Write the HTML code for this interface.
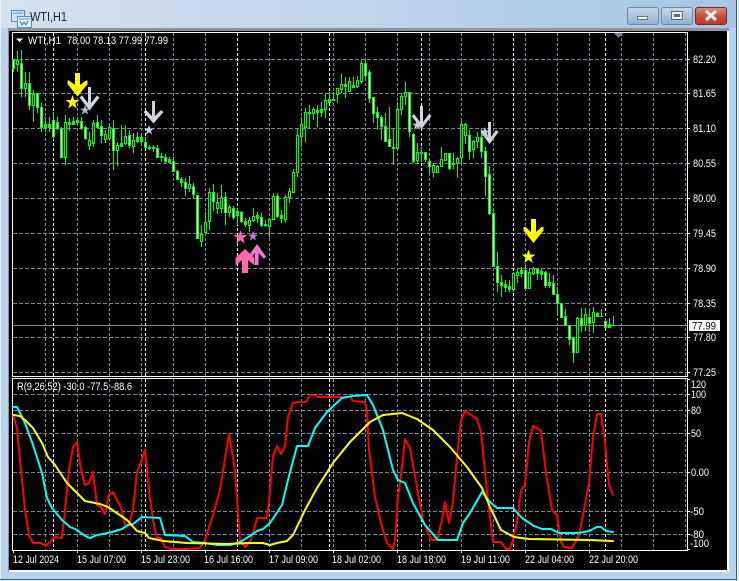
<!DOCTYPE html>
<html><head><meta charset="utf-8">
<style>
html,body{margin:0;padding:0;background:#b9d3ec;overflow:hidden}
svg{display:block}
text{font-family:"Liberation Sans",sans-serif;font-size:11px;fill:#fff}
</style></head>
<body>
<svg width="739" height="581" viewBox="0 0 739 581" xmlns="http://www.w3.org/2000/svg">
<defs>
<linearGradient id="tb" x1="0" y1="0" x2="1" y2="0"><stop offset="0" stop-color="#d3e2f1"/><stop offset=".5" stop-color="#bdd4ea"/><stop offset="1" stop-color="#a6c5e3"/></linearGradient>
<linearGradient id="bt" x1="0" y1="0" x2="0" y2="1"><stop offset="0" stop-color="#c6d8ea"/><stop offset=".5" stop-color="#abc4dc"/><stop offset="1" stop-color="#8fb0cf"/></linearGradient>
<linearGradient id="cl" x1="0" y1="0" x2="0" y2="1"><stop offset="0" stop-color="#dc8f80"/><stop offset=".5" stop-color="#c9523f"/><stop offset="1" stop-color="#b83a2a"/></linearGradient>
</defs>
<rect width="739" height="581" fill="#b7d2ec"/>
<rect width="739" height="28" fill="url(#tb)"/>
<path d="M0 579.500H737M736.500 0V580" stroke="#1d6a84" fill="none"/>
<path d="M0 580.500H739M737.500 0V581M738.500 0V581" stroke="#e4edf5" fill="none"/>
<path d="M.5 0V579" stroke="#e6f0f8" fill="none"/>
<!-- title icon -->
<rect x="11.500" y="10.500" width="13" height="11" fill="#cfe3f7" stroke="#4f8fd0"/>
<rect x="17.500" y="16.500" width="14" height="11" fill="#e8f2fb" stroke="#4f8fd0"/>
<path d="M13 13H23M19 19H30" stroke="#4f8fd0" fill="none"/>
<path d="M20 21L22 25L24 22L26 25L28 21" stroke="#3a78b8" fill="none"/>
<text x="30" y="21" style="font-size:13px;fill:#17243a" textLength="37" lengthAdjust="spacingAndGlyphs">WTI,H1</text>
<!-- window buttons -->
<rect x="627.500" y="7.500" width="31" height="17" rx="2.500" fill="url(#bt)" stroke="#6d87a3"/>
<rect x="637.500" y="16.500" width="10" height="3" fill="#f0f3f6" stroke="#4d5f75" stroke-width=".8"/>
<rect x="661.500" y="7.500" width="31" height="17" rx="2.500" fill="url(#bt)" stroke="#6d87a3"/>
<rect x="671.500" y="11.500" width="11" height="8" fill="#f2f4f7" stroke="#3c4a5c" stroke-width=".8"/>
<rect x="674" y="14" width="6" height="3" fill="#5b6a7d"/>
<rect x="695.500" y="7.500" width="31" height="17" rx="2.500" fill="url(#cl)" stroke="#6e2a2a"/>
<path d="M706 11L716 20M716 11L706 20" stroke="#f1f1f1" stroke-width="3" fill="none"/>
<!-- chart client -->
<rect x="8" y="28" width="721" height="544" fill="#8d949b"/>
<rect x="9" y="31" width="718" height="539" fill="#000"/>
<path d="M727.500 31V571M728.500 31V571M9 570.500H729M9 571.500H729" stroke="#fff" fill="none"/>
<!-- grid -->
<g fill="none" stroke="#778899" stroke-width="1" stroke-dasharray="4 2" shape-rendering="crispEdges">
<path d="M13 59.500H687M13 93.500H687M13 128.500H687M13 163.500H687M13 198.500H687M13 233.500H687M13 268.500H687M13 303.500H687M13 337.500H687M13 372.500H687"/>
<path d="M13 394.500H687M13 410.500H687M13 433.500H687M13 472.500H687M13 511.500H687M13 534.500H687"/>
</g>
<g fill="none" stroke="#778899" stroke-width="1" stroke-dasharray="3 2" shape-rendering="crispEdges">
<path d="M45.500 33V376M77.500 33V376M109.500 33V376M141.500 33V376M173.500 33V376M205.500 33V376M237.500 33V376M269.500 33V376M301.500 33V376M333.500 33V376M365.500 33V376M397.500 33V376M429.500 33V376M461.500 33V376M493.500 33V376M525.500 33V376M557.500 33V376M589.500 33V376M621.500 33V376M653.500 33V376M685.500 33V376"/>
<path d="M45.500 379V550M77.500 379V550M109.500 379V550M141.500 379V550M173.500 379V550M205.500 379V550M237.500 379V550M269.500 379V550M301.500 379V550M333.500 379V550M365.500 379V550M397.500 379V550M429.500 379V550M461.500 379V550M493.500 379V550M525.500 379V550M557.500 379V550M589.500 379V550M621.500 379V550M653.500 379V550M685.500 379V550"/>
</g>
<g fill="none" stroke="#fff" stroke-width="1" stroke-dasharray="3 2" shape-rendering="crispEdges">
<path d="M53.500 33V376M145.500 33V376M237.500 33V376M329.500 33V376M421.500 33V376M513.500 33V376M605.500 33V376"/>
<path d="M53.500 379V550M145.500 379V550M237.500 379V550M329.500 379V550M421.500 379V550M513.500 379V550M605.500 379V550"/>
</g>
<!-- frames -->
<path d="M12.500 32.500H687.500V376.500H12.500ZM12.500 378.500H687.500V550.500H12.500Z" fill="none" stroke="#fff" shape-rendering="crispEdges"/>
<path d="M687 59.500H690M687 93.500H690M687 128.500H690M687 163.500H690M687 198.500H690M687 233.500H690M687 268.500H690M687 303.500H690M687 337.500H690M687 372.500H690M687 379.500H690M687 394.500H690M687 410.500H690M687 433.500H690M687 472.500H690M687 511.500H690M687 534.500H690M687 549.500H690M13.500 550V553M77.500 550V553M141.500 550V553M205.500 550V553M269.500 550V553M333.500 550V553M397.500 550V553M461.500 550V553M525.500 550V553M589.500 550V553" stroke="#fff" fill="none"/>
<path d="M614 33H623L618.500 38Z" fill="#6f8294"/>
<path d="M16 38.500H23L19.500 42Z" fill="#fff"/>
<path d="M13 325.500H687" stroke="#8a8a8a" fill="none" shape-rendering="crispEdges"/>
<!-- candles wicks -->
<g fill="none" shape-rendering="crispEdges">
<path stroke="#00ff00" stroke-width="1" d="M13.500 59V72M17.500 51V72M21.500 50V97M25.500 72V97M29.500 72V110M33.500 90V122M37.500 93V113M41.500 103V132M45.500 117V132M49.500 117V132M53.500 112V140M57.500 117V130M61.500 127V158M65.500 115V165M69.500 118V131M73.500 117V125M77.500 117V125M81.500 117V130M85.500 126V140M89.500 132V150M93.500 120V147M97.500 115V128M101.500 120V143M105.500 130V143M109.500 123V140M113.500 120V170M117.500 142V166M121.500 125V147M125.500 125V145M129.500 130V148M133.500 133V153M137.500 132V143M141.500 133V143M145.500 137V147M149.500 145V150M153.500 145V152M157.500 145V157M161.500 153V162M165.500 154V163M169.500 157V163M173.500 157V171M177.500 170V180M181.500 177V187M185.500 178V196M189.500 176V192M193.500 183V198M197.500 195V238M201.500 225V247M205.500 212V233M209.500 188V230M213.500 184V211M217.500 193V214M221.500 185V213M225.500 192V225M229.500 205V217M233.500 206V220M237.500 208V225M241.500 211V223M245.500 218V227M249.500 217V232M253.500 208V222M257.500 212V223M261.500 213V227M265.500 220V227M269.500 218V237M273.500 193V220M277.500 193V218M281.500 210V223M285.500 195V223M289.500 188V203M293.500 169V193M297.500 128V177M301.500 117V147M305.500 108V142M309.500 105V128M313.500 107V120M317.500 105V127M321.500 102V117M325.500 93V118M329.500 92V102M333.500 92V100M337.500 88V103M341.500 74V93M345.500 77V98M349.500 77V92M353.500 77V88M357.500 76V88M361.500 60V84M365.500 60V78M369.500 70V103M373.500 97V123M377.500 107V130M381.500 115V140M385.500 113V142M389.500 107V147M393.500 128V165M397.500 102V148M401.500 93V115M405.500 82V105M409.500 92V137M413.500 133V163M417.500 143V163M421.500 147V162M425.500 152V162M429.500 160V175M433.500 163V177M437.500 165V173M441.500 147V166M445.500 153V161M449.500 153V170M453.500 153V169M457.500 157V178M461.500 121V163M465.500 123V144M469.500 130V160M473.500 140V158M477.500 132V148M481.500 128V158M485.500 147V196M489.500 166V215M493.500 210V266M497.500 252V292M501.500 275V297M505.500 280V292M509.500 280V292M513.500 272V292M517.500 268V283M521.500 267V277M525.500 265V288M529.500 268V289M533.500 267V275M537.500 268V280M541.500 268V280M545.500 271V288M549.500 273V288M553.500 275V295M557.500 287V313M561.500 303V318M565.500 309V326M569.500 325V345M573.500 337V363M577.500 317V352M581.500 308V332M585.500 308V331M589.500 310V332M593.500 307V333M597.500 312V317M601.500 309V317M605.500 318V327M609.500 318V327M613.500 316V326"/>
<!-- candle bodies -->
<path stroke="#00ff00" stroke-width="3" d="M13.500 59V69M17.500 60V65M21.500 63V89M25.500 83V89M29.500 83V106M33.500 94V106M37.500 93V108M41.500 107V128M45.500 124V128M49.500 124V128M53.500 120V137M57.500 122V129M61.500 128V158M65.500 122V158M69.500 122V125M73.500 121V125M77.500 120V123M81.500 121V129M85.500 127V139M89.500 140V146M93.500 123V144M97.500 122V128M101.500 126V136M105.500 134V140M109.500 127V139M113.500 128V151M117.500 145V151M121.500 143V147M125.500 136V144M129.500 135V146M133.500 140V147M137.500 137V142M141.500 137V142M145.500 142V148M149.500 147V149M153.500 147V149M157.500 148V158M161.500 156V158M165.500 157V162M169.500 159V163M173.500 161V172M177.500 171V180M181.500 179V183M185.500 182V189M189.500 184V189M193.500 186V195M197.500 195V239M201.500 234V242M205.500 222V233M209.500 192V222M213.500 192V202M217.500 202V209M221.500 197V209M225.500 197V213M229.500 207V213M233.500 208V218M237.500 211V216M241.500 212V222M245.500 221V225M249.500 220V226M253.500 216V221M257.500 215V219M261.500 217V226M265.500 224V226M269.500 219V227M273.500 196V220M277.500 196V217M281.500 215V219M285.500 197V220M289.500 191V198M293.500 172V193M297.500 135V173M301.500 124V137M305.500 112V128M309.500 112V114M313.500 109V114M317.500 110V113M321.500 109V113M325.500 100V110M329.500 99V103M333.500 99V101M337.500 88V95M341.500 84V90M345.500 84V87M349.500 81V92M353.500 85V88M357.500 80V87M361.500 63V82M365.500 63V76M369.500 72V99M373.500 97V114M377.500 112V118M381.500 117V127M385.500 126V142M389.500 139V147M393.500 147V149M397.500 109V149M401.500 96V110M405.500 92V97M409.500 92V132M413.500 134V162M417.500 152V161M421.500 152V154M425.500 152V160M429.500 161V167M433.500 165V173M437.500 166V173M441.500 159V167M445.500 153V161M449.500 153V169M453.500 163V165M457.500 158V164M461.500 124V158M465.500 124V136M469.500 135V152M473.500 141V150M477.500 137V142M481.500 137V152M485.500 151V177M489.500 174V214M493.500 213V267M497.500 266V283M501.500 282V286M505.500 284V288M509.500 286V290M513.500 273V290M517.500 272V276M521.500 270V274M525.500 270V289M529.500 272V289M533.500 268V274M537.500 269V274M541.500 271V275M545.500 272V286M549.500 282V286M553.500 283V295M557.500 294V304M561.500 303V318M565.500 316V326M569.500 325V340M573.500 337V353M577.500 318V353M581.500 318V326M585.500 314V326M589.500 317V324M593.500 312V323M597.500 313V317M601.500 316V317M605.500 321V328M609.500 324V328M613.500 325V326"/>
<path stroke="#fff" stroke-width="1" d="M13.500 60V68M21.500 64V88M29.500 84V105M37.500 94V107M41.500 108V127M53.500 121V136M57.500 123V128M61.500 129V157M81.500 122V128M85.500 128V138M97.500 123V127M101.500 127V135M113.500 129V150M129.500 136V145M145.500 143V147M157.500 149V157M165.500 158V161M173.500 162V171M177.500 172V179M185.500 183V188M193.500 187V194M197.500 196V238M213.500 193V201M225.500 198V212M233.500 209V217M241.500 213V221M261.500 218V225M277.500 197V216M345.500 85V86M365.500 64V75M369.500 73V98M373.500 98V113M377.500 113V117M381.500 118V126M385.500 127V141M389.500 140V146M409.500 93V131M413.500 135V161M425.500 153V159M429.500 162V166M449.500 154V168M469.500 136V151M481.500 138V151M485.500 152V176M489.500 175V213M493.500 214V266M497.500 267V282M501.500 283V285M525.500 271V288M537.500 270V273M545.500 273V285M553.500 284V294M557.500 295V303M561.500 304V317M565.500 317V325M569.500 326V339M573.500 338V352M581.500 319V325M589.500 318V323M605.500 322V327"/>
<path stroke="#000" stroke-width="1" d="M17.500 61V64M25.500 84V88M33.500 95V105M65.500 123V157M89.500 141V145M93.500 124V143M105.500 135V139M109.500 128V138M117.500 146V150M125.500 137V143M133.500 141V146M189.500 185V188M201.500 235V241M205.500 223V232M209.500 193V221M217.500 203V208M221.500 198V208M229.500 208V212M249.500 221V225M253.500 217V220M269.500 220V226M273.500 197V219M285.500 198V219M289.500 192V197M293.500 173V192M297.500 136V172M301.500 125V136M305.500 113V127M313.500 110V113M325.500 101V109M337.500 89V94M341.500 85V89M349.500 82V91M357.500 81V86M361.500 64V81M397.500 110V148M401.500 97V109M405.500 93V96M417.500 153V160M433.500 166V172M437.500 167V172M441.500 160V166M445.500 154V160M457.500 159V163M461.500 125V157M465.500 125V135M473.500 142V149M477.500 138V141M513.500 274V289M517.500 273V275M529.500 273V288M533.500 269V273M577.500 319V352M585.500 315V325M593.500 313V322"/>
</g>
<!-- indicator lines -->
<g fill="none" stroke-width="2" stroke-linejoin="round" stroke-linecap="round">
<polyline stroke="#ff0000" points="13,415 17,428 20,460 25,510 29,535 33,543 41,543 46,546 50,542 54,537 62,538 65,510 69,470 73,447 77,442 81,470 85,485 89,483 93,472 97,505 101,507 105,514 109,494 113,492 117,500 121,507 125,525 129,525 133,510 137,472 141,462 145,450 149,490 153,520 157,538 161,538 165,547 171,549 185,549 200,548 205,540 213,515 220,490 229,434 235,470 240,540 245,547 250,542 254,530 257,518 267,518 269,502 273,456 277,446 281,454 285,446 288,417 293,403 298,402 306,402 310,395 313,395 318,397 350,397 353,401 365,402 367,413 369,450 375,497 382,527 387,543 393,549 395,540 398,497 402,467 405,439 410,448 417,487 423,520 429,535 432,540 437,540 442,520 445,502 449,523 453,502 457,457 461,420 465,411 477,419 481,432 487,492 493,542 501,542 506,549 510,549 513,540 517,522 521,491 525,485 529,442 533,426 541,431 546,473 552,510 557,515 561,542 564,547 572,548 579,535 584,510 589,483 593,437 597,414 601,414 605,442 609,485 613,495"/>
<polyline stroke="#00ffff" points="13,407 17,407 25,423 33,445 42,473 47,498 52,508 62,520 70,527 75,529 87,537 90,538 97,535 103,534 112,532 122,529 128,525 133,524 142,517 160,518 165,535 185,536 193,542 205,543 217,545 230,545 240,542 250,536 257,531 263,529 270,523 282,505 288,480 297,446 308,446 315,428 327,412 342,398 353,396 367,395 373,405 383,430 393,470 398,480 405,483 413,503 425,525 438,540 457,540 463,523 470,513 482,492 490,502 497,508 513,508 522,518 534,526 542,529 551,529 559,533 579,533 589,531 597,527 601,527 606,531 613,532"/>
<polyline stroke="#ffff00" points="13,415 20,416 25,420 33,428 42,443 48,457 55,465 67,483 85,501 100,504 108,507 127,520 137,531 145,533 149,538 163,541 187,543 227,544 250,543 263,543 270,545 277,543 287,541 293,535 305,510 317,488 333,463 350,442 370,422 383,415 402,413 417,419 433,430 450,447 467,467 482,488 490,507 501,530 514,537 529,539 589,540 613,541"/>
</g>
<!-- markers -->
<g>
<path fill="#ffff00" d="M75 73H80V85L86 80.500H87.500V84L77.500 96.500L67.500 84V80.500H69L75 85Z"/>
<polygon fill="#ffff00" points="72.500,95 74.200,100 79.500,100 75.200,103.200 76.800,108.500 72.500,105.200 68.200,108.500 69.800,103.200 65.500,100 70.800,100"/>
<path fill="#d0d4de" d="M88 87H91V103L97 95.500L99.500 97.500L89.500 110.500L79.500 97.500L82 95.500L88 103Z"/>
<polygon fill="#b8bccc" points="85,105 86.300,108.600 90,108.600 87,110.800 88.100,114.500 85,112.300 81.900,114.500 83,110.800 80,108.600 83.700,108.600"/>
<path fill="#d0d4de" d="M152 101H155V116L161 110L163.500 112L153.500 123.500L143.500 112L146 110L152 116Z"/>
<polygon fill="#c8ccdc" points="149,125 150.300,128.600 154,128.600 151,130.800 152.100,134.500 149,132.300 145.900,134.500 147,130.800 144,128.600 147.700,128.600"/>
<path fill="#d0d4de" d="M420 106H423V122L429 114L431.500 116L421.500 129L411.500 116L414 114L420 122Z"/>
<polygon fill="#c8ccdc" points="417,120 418.300,123.600 422,123.600 419,125.800 420.100,129.500 417,127.300 413.900,129.500 415,125.800 412,123.600 415.700,123.600"/>
<path fill="#d0d4de" d="M488 122H491V137L496 130L498.500 132L489.500 144L480.500 132L483 130L488 137Z"/>
<polygon fill="#c8ccdc" points="485,127 486.300,130.600 490,130.600 487,132.800 488.100,136.500 485,134.300 481.900,136.500 483,132.800 480,130.600 483.700,130.600"/>
<path fill="#ffff00" d="M531 219H536V232L541.500 227H543.500V230.500L533.500 243L523.500 230.500V227H525.500L531 232Z"/>
<polygon fill="#ffff00" points="528.500,249.500 530.200,254.500 535.500,254.500 531.200,257.700 532.800,263 528.500,259.700 524.200,263 525.800,257.700 521.500,254.500 526.800,254.500"/>
<polygon fill="#ff69b4" points="240.500,230 242.200,235 247.500,235 243.200,238.200 244.800,243.500 240.500,240.200 236.200,243.500 237.800,238.200 233.500,235 238.800,235"/>
<polygon fill="#d07ad8" points="253,231 254.300,234.600 258,234.600 255,236.800 256.100,240.500 253,238.300 249.900,240.500 251,236.800 248,234.600 251.700,234.600"/>
<path fill="#f078d0" d="M255 265V253L250 259L248 256.500L257 244L266 256.500L264 259L258.500 253V265Z"/>
<path fill="#ff69b4" d="M242 273V260L236 265H235.500V258L245 249L254.500 258V265H254L248 260V273Z"/>
</g>
<!-- price label -->
<rect x="689" y="320" width="31" height="11" fill="#fff"/>
<text x="692" y="329.500" style="fill:#000" textLength="24" lengthAdjust="spacingAndGlyphs">77.99</text>
<!-- axis labels -->
<g>
<text x="693" y="63" textLength="23" lengthAdjust="spacingAndGlyphs">82.20</text>
<text x="693" y="97" textLength="23" lengthAdjust="spacingAndGlyphs">81.65</text>
<text x="693" y="132" textLength="23" lengthAdjust="spacingAndGlyphs">81.10</text>
<text x="693" y="167" textLength="23" lengthAdjust="spacingAndGlyphs">80.55</text>
<text x="693" y="202" textLength="23" lengthAdjust="spacingAndGlyphs">80.00</text>
<text x="693" y="237" textLength="23" lengthAdjust="spacingAndGlyphs">79.45</text>
<text x="693" y="272" textLength="23" lengthAdjust="spacingAndGlyphs">78.90</text>
<text x="693" y="307" textLength="23" lengthAdjust="spacingAndGlyphs">78.35</text>
<text x="693" y="341" textLength="23" lengthAdjust="spacingAndGlyphs">77.80</text>
<text x="693" y="376" textLength="23" lengthAdjust="spacingAndGlyphs">77.25</text>
<text x="691" y="388" textLength="15" lengthAdjust="spacingAndGlyphs">120</text>
<text x="691" y="398" textLength="15" lengthAdjust="spacingAndGlyphs">100</text>
<text x="691" y="414" textLength="10" lengthAdjust="spacingAndGlyphs">80</text>
<text x="691" y="437" textLength="10" lengthAdjust="spacingAndGlyphs">50</text>
<text x="691" y="476" textLength="18" lengthAdjust="spacingAndGlyphs">0.00</text>
<text x="690" y="515" textLength="14" lengthAdjust="spacingAndGlyphs">-50</text>
<text x="690" y="538" textLength="14" lengthAdjust="spacingAndGlyphs">-80</text>
<text x="690" y="547" textLength="19" lengthAdjust="spacingAndGlyphs">-100</text>
<text x="13" y="563" textLength="46" lengthAdjust="spacingAndGlyphs">12 Jul 2024</text>
<text x="77" y="563" textLength="49" lengthAdjust="spacingAndGlyphs">15 Jul 07:00</text>
<text x="141" y="563" textLength="49" lengthAdjust="spacingAndGlyphs">15 Jul 23:00</text>
<text x="204" y="563" textLength="49" lengthAdjust="spacingAndGlyphs">16 Jul 16:00</text>
<text x="269" y="563" textLength="49" lengthAdjust="spacingAndGlyphs">17 Jul 09:00</text>
<text x="332" y="563" textLength="49" lengthAdjust="spacingAndGlyphs">18 Jul 02:00</text>
<text x="397" y="563" textLength="49" lengthAdjust="spacingAndGlyphs">18 Jul 18:00</text>
<text x="461" y="563" textLength="49" lengthAdjust="spacingAndGlyphs">19 Jul 11:00</text>
<text x="525" y="563" textLength="49" lengthAdjust="spacingAndGlyphs">22 Jul 04:00</text>
<text x="589" y="563" textLength="49" lengthAdjust="spacingAndGlyphs">22 Jul 20:00</text>
<text x="28" y="44" textLength="33" lengthAdjust="spacingAndGlyphs">WTI,H1</text>
<text x="67" y="44" textLength="101" lengthAdjust="spacingAndGlyphs">78.00 78.13 77.99 77.99</text>
<text x="17" y="390" textLength="115" lengthAdjust="spacingAndGlyphs">R(9,26,52) -30.0 -77.5 -88.6</text>
</g>
</svg>
</body></html>
